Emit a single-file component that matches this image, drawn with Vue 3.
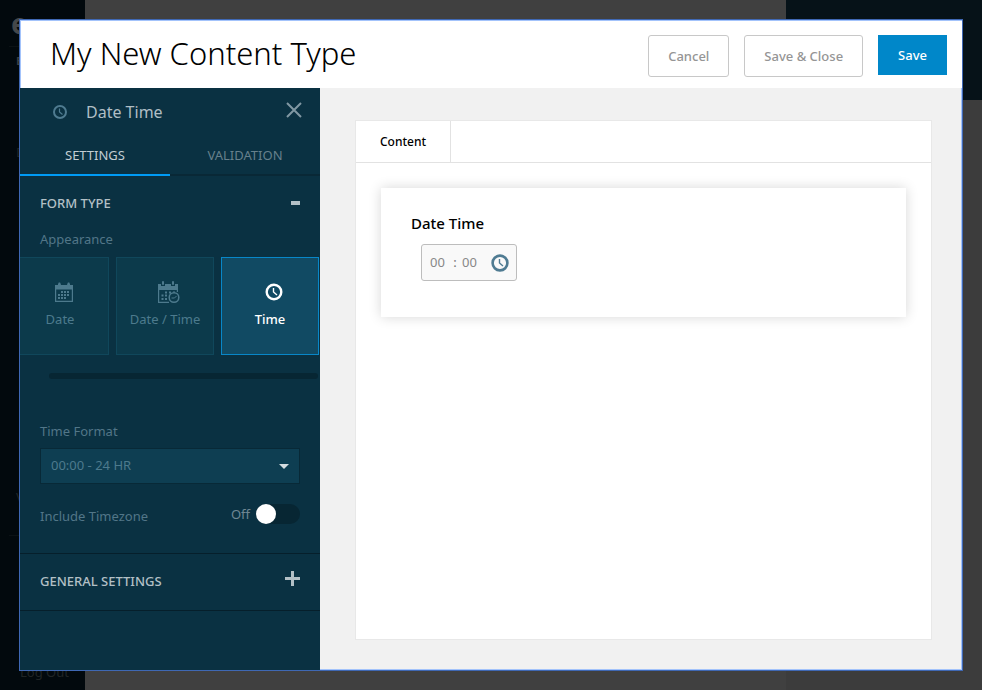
<script setup>
import { ref } from 'vue'

const appearance = ref('time')
const choices = [
  { id: 'date', label: 'Date' },
  { id: 'datetime', label: 'Date / Time' },
  { id: 'time', label: 'Time' },
]
const tab = ref('settings')
const format = ref('24')
const timezone = ref(false)
const hours = ref('')
const minutes = ref('')
</script>

<template>
  <div class="page">
    <div class="backdrop" aria-hidden="true">
      <div class="nav">
        <span class="brand">e</span>
        <span class="nav-title">E</span>
        <span class="nav-item first">D</span>
        <span class="nav-item second">V</span>
        <span class="nav-item logout">Log Out</span>
      </div>
      <div class="under"></div>
      <div class="aside"></div>
    </div>

    <div class="modal" role="dialog" aria-labelledby="title">
      <header class="head">
        <h1 id="title">My New Content Type</h1>
        <button type="button" class="btn">Cancel</button>
        <button type="button" class="btn">Save &amp; Close</button>
        <button type="button" class="btn primary">Save</button>
      </header>

      <div class="body">
        <aside class="panel">
          <div class="panel-head">
            <svg class="clock" width="16" height="16" viewBox="0 0 16 16" fill="none" stroke="currentColor">
              <circle cx="8" cy="8" r="6" stroke-width="2" />
              <path d="M7.500 4.500V8l3 2.500" stroke-width="1.200" />
            </svg>
            <h2>Date Time</h2>
            <button type="button" class="icon-btn" aria-label="Close">
              <svg width="16" height="16" viewBox="0 0 16 16" stroke="currentColor" stroke-width="2">
                <path d="M1 1l14 14M15 1L1 15" />
              </svg>
            </button>
          </div>

          <div class="tabs">
            <button type="button" :class="{ on: tab === 'settings' }" @click="tab = 'settings'">SETTINGS</button>
            <button type="button" :class="{ on: tab === 'validation' }" @click="tab = 'validation'">VALIDATION</button>
          </div>

          <section class="group">
            <div class="group-head">
              <h3>FORM TYPE</h3>
              <button type="button" class="icon-btn" aria-label="Collapse">
                <svg width="9" height="4" viewBox="0 0 9 4"><path d="M0 0h9v4H0z" fill="currentColor" /></svg>
              </button>
            </div>

            <p class="label">Appearance</p>
            <div class="cards">
              <button
                v-for="c in choices"
                :key="c.id"
                type="button"
                class="card"
                :class="{ chosen: appearance === c.id }"
                @click="appearance = c.id"
              >
                <svg v-if="c.id === 'date'" width="18" height="24" viewBox="0 0 18 24" fill="currentColor">
                  <path fill-rule="evenodd" d="M0 5h3V3.500h2.800V5h6.400V3.500H15V5h3v17H0zM1.200 9.500v11.300h15.600V9.500z" />
                  <path d="M3.600 2.500h1.600v4H3.600zM12.800 2.500h1.600v4h-1.600z" />
                  <path d="M6 11h2v2H6zM9 11h2v2H9zM12 11h2v2h-2zM3 14h2v2H3zM6 14h2v2H6zM9 14h2v2H9zM12 14h2v2h-2zM3 17h2v2H3zM6 17h2v2H6zM9 17h2v2H9z" />
                </svg>
                <svg v-else-if="c.id === 'datetime'" width="24" height="24" viewBox="0 0 24 24" fill="currentColor">
                  <path d="M1 4h3v2h4V4h6v2h4V4h3v6H1z" />
                  <path d="M1 9h1.200v12.800H12V23H1zM19.800 9H21v3h-1.200z" />
                  <rect x="5" y="1" width="2" height="4" rx="1" />
                  <rect x="15" y="1" width="2" height="4" rx="1" />
                  <path d="M8 11.500h2v2H8zM12 11.500h2v2h-2zM16 11.500h2v1h-2zM4.500 14.500h2v2h-2zM8 14.500h2v2H8zM4.500 18h2v2h-2zM8 18h2v2H8z" />
                  <circle cx="17" cy="17.500" r="4.800" fill="none" stroke="currentColor" stroke-width="1.500" />
                  <path d="M14.500 18h3l2-2" fill="none" stroke="currentColor" />
                </svg>
                <svg v-else width="18" height="24" viewBox="0 0 18 24" fill="none" stroke="currentColor">
                  <circle cx="9" cy="12" r="7.300" stroke-width="2.400" />
                  <path d="M8.500 8v4l3.500 3" stroke-width="1.400" />
                </svg>
                <span>{{ c.label }}</span>
              </button>
            </div>
            <div class="scroll"></div>

            <label class="label format" for="format">Time Format</label>
            <div class="select">
              <select id="format" v-model="format">
                <option value="24">00:00 - 24 HR</option>
                <option value="12">00:00 - 12 HR</option>
              </select>
              <svg width="10" height="5" viewBox="0 0 10 5"><path d="M0 0h10L5 5z" fill="currentColor" /></svg>
            </div>

            <div class="zone">
              <label class="label" for="zone">Include Timezone</label>
              <span class="state">{{ timezone ? 'On' : 'Off' }}</span>
              <input id="zone" v-model="timezone" type="checkbox" class="toggle" />
            </div>
          </section>

          <section class="group-head general">
            <h3>GENERAL SETTINGS</h3>
            <button type="button" class="icon-btn" aria-label="Expand">
              <svg width="15" height="15" viewBox="0 0 15 15"><path d="M6 0h3v6h6v3H9v6H6V9H0V6h6z" fill="currentColor" /></svg>
            </button>
          </section>
        </aside>

        <main class="canvas">
          <div class="sheet">
            <div class="sheet-tabs"><button type="button">Content</button></div>
            <div class="field">
              <label for="hours">Date Time</label>
              <div class="time">
                <input id="hours" v-model="hours" type="text" placeholder="00" />
                <span>:</span>
                <input v-model="minutes" type="text" placeholder="00" aria-label="Minutes" />
                <svg width="18" height="18" viewBox="0 0 18 18" fill="none" stroke="currentColor">
                  <circle cx="9" cy="9" r="7.400" stroke-width="2.600" />
                  <path d="M8.500 5v4l3.500 3" stroke-width="1.400" />
                </svg>
              </div>
            </div>
          </div>
        </main>
      </div>
    </div>
  </div>
</template>

<style>
body {
  margin: 0;
  background: #404040;
}
</style>

<style scoped>
* {
  box-sizing: border-box;
}
.page {
  display: grid;
  grid-template-columns: minmax(0, 1fr);
  min-height: 100vh;
  font-family: "Noto Sans", "Open Sans", sans-serif;
  font-size: 13px;
}
button,
select,
input {
  font: inherit;
  color: inherit;
}
button {
  padding: 0;
  border: 0;
  background: none;
  cursor: pointer;
}
h1,
h2,
h3,
p {
  margin: 0;
  font-weight: 400;
}
.backdrop {
  grid-area: 1 / 1;
  display: grid;
  grid-template-columns: 85px 1fr 196px;
  overflow: hidden;
}
.nav {
  display: flex;
  flex-direction: column;
  padding: 8px 0 8px 9px;
  background: #02090d;
  color: #202526;
}
.brand {
  padding-left: 2px;
  height: 39px;
  border-bottom: 1px solid #0b1215;
  color: #45484a;
  font-size: 28px;
  font-weight: 700;
  line-height: 30px;
}
.nav-title {
  padding: 4px 0 0 7px;
  color: #3b3f41;
  font-size: 11px;
  font-weight: 700;
  line-height: 20px;
}
.nav-item {
  padding-left: 7px;
  line-height: 20px;
}
.first {
  margin-top: 71px;
}
.second {
  margin-top: auto;
  padding-bottom: 28px;
  border-bottom: 1px solid #0b1215;
}
.logout {
  margin-top: 126px;
  padding-left: 11px;
}
.under {
  background: #404040;
}
.aside {
  background: linear-gradient(#061218 100px, #3c3c3c 100px);
}
.modal {
  grid-area: 1 / 1;
  display: flex;
  flex-direction: column;
  margin: 20px;
  z-index: 1;
  box-shadow: 0 0 0 1px #3f68b4;
}
.head {
  display: flex;
  align-items: flex-start;
  gap: 15px;
  min-height: 68px;
  padding: 15px 15px 0 30px;
  background: #fff;
  box-shadow: inset 1px 1px #a3c3fb;
}
h1 {
  flex: 1;
  color: #000;
  font-size: 31px;
  font-weight: 300;
  line-height: 36px;
}
.btn {
  height: 42px;
  padding: 0 19px;
  border: 1px solid #c8c8c8;
  border-radius: 3px;
  color: #959595;
  font-weight: 500;
}
.primary {
  height: 40px;
  padding: 0 20px;
  border: 0;
  border-radius: 0;
  background: #0087c9;
  color: #fff;
}
.body {
  flex: 1;
  display: flex;
}
.panel {
  flex: none;
  width: 300px;
  background: #0a3142;
  color: #5b7d8e;
}
.panel-head {
  display: flex;
  align-items: center;
  height: 48px;
  padding: 0 18px 0 32px;
}
.clock {
  color: #4f7b90;
}
h2 {
  flex: 1;
  padding-left: 18px;
  color: #b0bec5;
  font-size: 16px;
}
.icon-btn {
  display: flex;
  color: #8198a3;
}
.panel-head .icon-btn {
  padding-bottom: 4px;
}
.tabs {
  display: flex;
}
.tabs button {
  flex: 1;
  height: 40px;
  border-bottom: 2px solid #092836;
  color: #66808c;
}
.tabs .on {
  border-color: #009bf5;
  color: #c2cdd2;
}
.group {
  height: 378px;
  border-bottom: 1px solid #061f2b;
}
.group-head {
  display: flex;
  justify-content: space-between;
  align-items: center;
  height: 53px;
  padding: 0 20px;
}
.group-head .icon-btn {
  color: #b3c0c6;
}
h3 {
  color: #b3c0c6;
  font-size: 13px;
  font-weight: 500;
}
.label {
  color: #527688;
  line-height: 20px;
}
p.label {
  padding: 0 20px 8px;
}
.cards {
  display: flex;
  justify-content: flex-end;
  gap: 7px;
  padding-right: 1px;
  overflow: hidden;
}
.card {
  flex: none;
  display: flex;
  flex-direction: column;
  align-items: center;
  gap: 5px;
  width: 98px;
  height: 98px;
  padding-top: 22px;
  border: 1px solid #10475b;
  background: #0c3a4b;
  color: #4d7a8d;
}
.card svg {
  margin-left: 8px;
}
.card span {
  line-height: 20px;
}
.chosen {
  border-color: #0887c8;
  background: #114a63;
  color: #fff;
  font-weight: 500;
}
.scroll {
  height: 6px;
  margin: 18px 2px 42px 29px;
  border-radius: 3px;
  background: #072633;
}
.format {
  display: block;
  padding-left: 20px;
}
.select {
  display: flex;
  align-items: center;
  margin: 7px 20px 20px;
  border: 1px solid #082937;
  background: #0e3e52;
  color: #d5dde1;
}
.select select {
  flex: 1;
  height: 34px;
  padding: 0 10px 2px;
  border: 0;
  background: none;
  color: #4d7a8d;
  appearance: none;
}
.select svg {
  margin-right: 10px;
}
.zone {
  display: flex;
  align-items: flex-start;
  padding: 0 20px;
}
.zone .label {
  flex: 1;
  padding-top: 2px;
}
.state {
  padding-right: 6px;
  color: #6f8793;
  line-height: 20px;
}
.toggle {
  display: flex;
  width: 44px;
  height: 20px;
  margin: 0;
  border-radius: 10px;
  background: #072633;
  appearance: none;
}
.toggle:checked {
  justify-content: flex-end;
}
.toggle::before {
  content: "";
  width: 20px;
  height: 20px;
  border-radius: 50%;
  background: #fff;
}
.general {
  height: 57px;
  padding-bottom: 2px;
  border-bottom: 1px solid #061f2b;
}
.general .icon-btn {
  padding-bottom: 6px;
}
.canvas {
  flex: 1;
  display: flex;
  padding: 32px 30px 30px 35px;
  background: #f1f1f1;
  box-shadow: inset -1px -1px #a3c3fb;
}
.sheet {
  flex: 1;
  border: 1px solid #e8e8e8;
  background: #fff;
}
.sheet-tabs {
  border-bottom: 1px solid #e2e2e2;
}
.sheet-tabs button {
  height: 41px;
  padding: 0 24px;
  border-right: 1px solid #e2e2e2;
  color: #000;
  font-size: 12px;
  font-weight: 500;
}
.field {
  margin: 25px;
  padding: 24px 30px 36px;
  background: #fff;
  color: #000;
  box-shadow: 0 0 12px rgba(0, 0, 0, 0.16);
}
.field label {
  display: block;
  font-size: 15px;
  font-weight: 500;
  line-height: 22px;
}
.time {
  display: inline-flex;
  align-items: center;
  height: 37px;
  margin: 10px 10px 0;
  padding: 0 7px 0 8px;
  border: 1px solid #bdbdbd;
  border-radius: 3px;
  background: #f9f9f9;
  color: #777;
}
.time input {
  width: 18px;
  padding: 0 0 2px;
  border: 0;
  outline: 0;
  background: none;
}
.time input::placeholder {
  color: #888;
}
.time span {
  width: 14px;
  padding-bottom: 2px;
  text-align: center;
}
.time svg {
  margin-left: 11px;
  color: #4f7b92;
}
</style>
